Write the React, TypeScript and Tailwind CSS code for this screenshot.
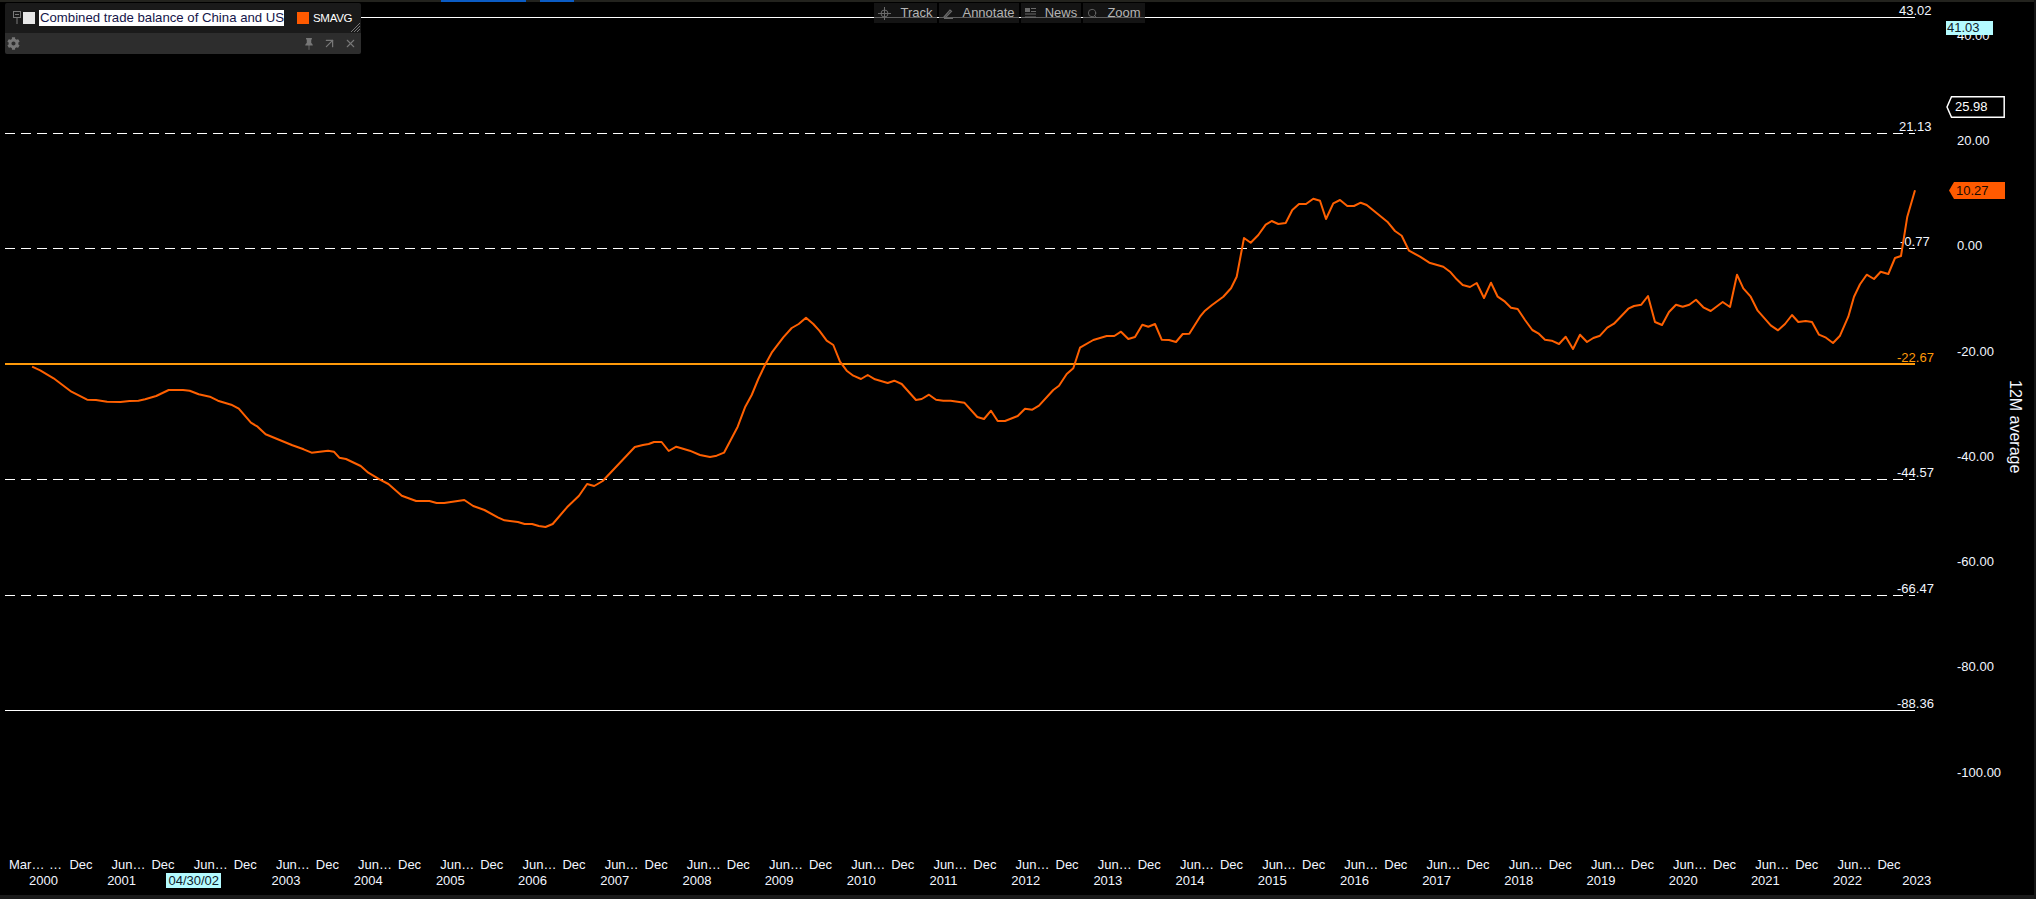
import { ArrowUpRight, Search, X } from 'lucide-react';
import { BsPinFill } from 'react-icons/bs';
import { FaCog } from 'react-icons/fa';

type Pt = [number, number];

// traced from the reference, in crop coordinates: [points, originX, originY, scaleX, scaleY]
const SEGMENTS: [Pt[], number, number, number, number][] = [
  [
    [[72,200],[90,211],[120,235],[160,275],[195,299],[215,300],[240,305],[270,306],[290,303],[310,302],[325,298],[350,288],[378,270],[410,270],[425,272],[445,283],[470,290],[488,302],[518,314],[535,326],[562,368],[577,380],[595,403],[655,436],[680,448],[698,458],[735,452],[748,455],[760,473],[775,477],[808,498],[825,518],[850,538],[870,552],[900,587],[932,603],[962,603],[978,609],[995,609],[1040,600],[1060,618],[1085,630],[1115,652],[1130,661],[1160,666],[1175,672],[1192,672],[1207,678],[1222,681],[1238,672],[1270,622],[1297,587],[1315,552],[1331,558],[1350,543],[1375,508],[1422,441],[1440,435],[1453,432],[1465,426],[1482,426],[1498,453],[1515,440],[1545,452],[1568,465]],
    0, 300, 2.24, 3,
  ],
  [
    [[30,531],[50,527],[72,518],[113,440],[135,382],[155,345],[175,297],[195,255],[215,218],[250,172],[275,144],[296,132],[318,113],[340,132],[358,152],[380,182],[400,195],[420,245],[440,272],[460,287],[483,297],[503,285],[525,298],[563,309],[583,302],[605,312],[648,360],[665,357],[687,344],[708,359],[730,362],[752,362],[793,368],[832,411],[852,417],[873,392],[893,423],[915,423],[953,408],[975,386],[997,389],[1017,377],[1060,330],[1077,317],[1100,282],[1120,265],[1140,203],[1180,180],[1220,168],[1243,168],[1263,155],[1285,177],[1305,171],[1327,134],[1345,140],[1365,132],[1385,179],[1407,180],[1428,186],[1448,162],[1468,161],[1500,110]],
    700, 280, 3, 3,
  ],
  [
    [[15,392],[35,376],[70,350],[93,325],[110,290],[132,174],[152,188],[175,165],[197,134],[215,123],[235,132],[257,129],[277,90],[297,72],[318,72],[340,56],[360,62],[378,117],[400,70],[420,60],[442,78],[462,78],[482,68],[500,75],[562,125],[585,153],[605,167],[627,212],[660,230],[688,248],[730,260],[750,275],[770,298],[788,315],[810,321],[830,309],[852,354],[873,308],[893,350]],
    1200, 180, 3, 3,
  ],
  [
    [[15,395],[33,413],[53,417],[75,450],[97,480],[115,490],[135,509],[155,512],[177,522],[197,500],[219,537],[240,494],[261,516],[280,504],[300,497],[322,473],[342,461],[385,416],[402,408],[424,404],[444,378],[465,456],[486,465],[507,426],[528,404],[548,410],[568,404],[588,389],[610,412],[632,423],[668,396],[690,411],[711,314],[730,355],[752,380],[773,422],[812,466],[834,481],[855,462],[876,435],[895,456],[917,453],[936,456],[957,494],[978,503],[999,519],[1020,497],[1045,440],[1062,380],[1080,343],[1100,314],[1122,327],[1142,305],[1165,312],[1185,264],[1203,258],[1222,140],[1245,61]],
    1500, 170, 3, 3,
  ],
];

const linePoints = SEGMENTS.flatMap(([pts, ox, oy, sx, sy]) =>
  pts.map(([x, y]) => `${(ox + x / sx).toFixed(1)},${(oy + y / sy).toFixed(1)}`)
).join(' ');

const LEVELS = [
  { y: 17.5, label: '43.02', labelY: 10, labelX: 1899, dashed: false, color: '#ffffff' },
  { y: 133.5, label: '21.13', labelY: 126, labelX: 1899, dashed: true, color: '#ffffff' },
  { y: 248.5, label: '-0.77', labelY: 241, labelX: 1900, dashed: true, color: '#ffffff' },
  { y: 364, label: '-22.67', labelY: 357, labelX: 1897, dashed: false, color: '#ff9a0a' },
  { y: 479.5, label: '-44.57', labelY: 472, labelX: 1897, dashed: true, color: '#ffffff' },
  { y: 595.5, label: '-66.47', labelY: 588, labelX: 1897, dashed: true, color: '#ffffff' },
  { y: 710.5, label: '-88.36', labelY: 703, labelX: 1897, dashed: false, color: '#ffffff' },
];

const AXIS_TICKS = ['40.00', '20.00', '0.00', '-20.00', '-40.00', '-60.00', '-80.00', '-100.00'];
const YEARS = Array.from({ length: 22 }, (_, i) => 2001 + i);

function TrackIcon() {
  return (
    <svg width="13" height="13" viewBox="0 0 13 13" fill="none" stroke="#6a6a6a">
      <circle cx="6.5" cy="6.5" r="3.5" />
      <path d="M6.5 0v13M0 6.5h13" />
    </svg>
  );
}

function AnnotateIcon() {
  return (
    <svg width="11" height="11" viewBox="0 0 11 11" fill="none" stroke="#6a6a6a" strokeWidth="1.2">
      <path d="M1 9l6-7 1.5 1.2L2.5 9.5z" />
      <path d="M1 10.5h9" />
    </svg>
  );
}

function NewsIcon() {
  return (
    <svg width="11" height="10" viewBox="0 0 11 10" fill="#6a6a6a">
      <rect x="0" y="0" width="5" height="4" />
      <rect x="6" y="0" width="5" height="1" />
      <rect x="6" y="3" width="5" height="1" />
      <rect x="0" y="5.5" width="11" height="1" />
      <rect x="0" y="8.5" width="11" height="1" />
    </svg>
  );
}

function ToolButton({ icon, label, width, gap }: { icon: React.ReactNode; label: string; width: string; gap: string }) {
  return (
    <div className={`flex h-5 items-center justify-center bg-[#1c1c1c]/70 text-[#b4b4b4] ${width} ${gap}`}>
      {icon}
      <span>{label}</span>
    </div>
  );
}

export default function App() {
  return (
    <div className="relative flex h-[899px] w-[2036px] flex-col overflow-hidden bg-black text-[13px] leading-4 text-[#f2f6ff] [font-family:'Liberation_Sans',sans-serif]">
      <div className="flex h-[2px] shrink-0 bg-[#23231e] pr-[11px]">
        <div className="w-[441px]" />
        <div className="w-[85px] bg-[#0b5cc4]" />
        <div className="w-[14px]" />
        <div className="w-[34px] bg-[#0b5cc4]" />
      </div>

      <div className="flex h-[855px] shrink-0">
        <svg width="1940" height="855" viewBox="0 2 1940 855" className="block shrink-0">
          {LEVELS.map((l) => (
            <g key={l.label}>
              <line
                x1="5"
                x2="1915"
                y1={l.y}
                y2={l.y}
                stroke={l.color}
                strokeWidth={l.color === '#ffffff' ? 1 : 2}
                strokeDasharray={l.dashed ? '10 6' : undefined}
              />
              <text x={l.labelX} y={l.labelY + 4.5} fill={l.color === '#ffffff' ? '#f2f6ff' : l.color} fontSize="13">
                {l.label}
              </text>
            </g>
          ))}
          <polyline points={linePoints} fill="none" stroke="#ff6000" strokeWidth="2" strokeLinejoin="round" />
        </svg>

        <div className="relative flex w-[96px] flex-col">
          <div className="-mt-[19px] flex flex-col pl-[17px]">
            {AXIS_TICKS.map((t) => (
              <div key={t} className="flex h-[105.3px] items-center">
                {t}
              </div>
            ))}
          </div>
          <div className="absolute top-[378px] left-[67px] text-[16px] [writing-mode:vertical-rl]">12M average</div>
        </div>
      </div>

      <div className="flex h-4 shrink-0 items-center">
        <div className="flex w-[110.5px] shrink-0 items-center pl-[9px]">
          <span className="w-[33px]">Mar…</span>
          <span className="w-[27px] text-center">…</span>
          <span className="w-[24px] text-center">Dec</span>
        </div>
        {YEARS.map((y) => (
          <div key={y} className="flex w-[82.2px] shrink-0 items-center">
            <span className="w-[36px] text-center">Jun…</span>
            <span className="ml-[4.5px] w-[24px] text-center">Dec</span>
          </div>
        ))}
      </div>

      <div className="flex h-4 shrink-0 items-center">
        <div className="w-[80.5px] shrink-0 pl-[29px]">2000</div>
        {YEARS.map((y) => (
          <div key={y} className="w-[82.2px] shrink-0 text-center">
            {y === 2002 ? (
              <span className="relative right-[10px] bg-[#b4fbff] px-[2px] text-[#10202a]">04/30/02</span>
            ) : (
              y
            )}
          </div>
        ))}
        <div className="-ml-[13px] w-[82.2px] shrink-0 text-center">2023</div>
      </div>

      <div className="flex-1" />
      <div className="h-1 shrink-0 bg-[#1a1a1a]" />

      {/* legend panel */}
      <div className="absolute top-[2.5px] left-[5px] flex w-[356px] flex-col overflow-hidden rounded-[2px]">
        <div className="relative flex h-[30.5px] items-center bg-[#1a1a1a] pl-[8px]">
          <svg width="8" height="13" viewBox="0 0 8 13" fill="none" stroke="#7a7a7a" className="shrink-0">
            <rect x="0.5" y="0.5" width="7" height="6" />
            <path d="M2 3.5h4M4 6.5V13" />
          </svg>
          <div className="ml-[2px] h-3 w-3 shrink-0 bg-[#e8e8e8]" />
          <div className="ml-1 flex h-4 w-[245px] shrink-0 items-center bg-white pl-[1px] text-[13.2px] whitespace-nowrap text-[#16164a]">
            Combined trade balance of China and US
          </div>
          <div className="ml-[13px] h-3 w-3 shrink-0 bg-[#ff5a00]" />
          <div className="ml-1 text-[11.5px] tracking-[-0.3px] text-white">SMAVG</div>
          <svg width="9" height="9" viewBox="0 0 9 9" stroke="#777" className="absolute right-[1px] bottom-[1px]">
            <path d="M0 9L9 0M3 9L9 3M6 9L9 6" />
          </svg>
        </div>
        <div className="flex h-[21px] items-center bg-[#2d2d2d] pr-[4px] pl-[2px] text-[#777]">
          <FaCog size={13} />
          <div className="ml-auto flex items-center gap-[7px]">
            <BsPinFill size={12} />
            <ArrowUpRight size={15} strokeWidth={2} />
            <X size={13} strokeWidth={2} />
          </div>
        </div>
      </div>

      {/* chart toolbar */}
      <div className="absolute top-[3px] left-[874px] flex gap-[2px]">
        <ToolButton icon={<TrackIcon />} label="Track" width="w-[63px]" gap="gap-[9px]" />
        <ToolButton icon={<AnnotateIcon />} label="Annotate" width="w-[80px]" gap="gap-[8px]" />
        <ToolButton icon={<NewsIcon />} label="News" width="w-[60px]" gap="gap-[9px]" />
        <ToolButton icon={<Search size={11} color="#6a6a6a" />} label="Zoom" width="w-[62px]" gap="gap-[9px]" />
      </div>

      {/* last-value tags on the axis */}
      <div className="absolute top-[21px] left-[1946px] flex h-[14px] w-[47px] items-center bg-[#b4fbff] pl-[1px] text-[#10202a]">41.03</div>
      <div className="absolute top-[96px] left-[1946px] h-[22px] w-[59px]">
        <svg width="59" height="22" viewBox="0 0 59 22" fill="black" stroke="white" strokeWidth="1.5" className="absolute inset-0">
          <path d="M5.5 0.8H58.2V21.2H5.5L1 11z" />
        </svg>
        <span className="absolute top-[3px] left-[9px] text-white">25.98</span>
      </div>
      <div className="absolute top-[182px] left-[1949px] h-[17px] w-[56px]">
        <svg width="56" height="17" viewBox="0 0 56 17" fill="#ff5a00" className="absolute inset-0">
          <path d="M5 0H56V17H5L0 8.5z" />
        </svg>
        <span className="absolute top-[1px] left-[7px] text-[#1a0a00]">10.27</span>
      </div>

      <div className="absolute top-0 right-0 h-full w-[2px] bg-[#161616]" />
    </div>
  );
}
